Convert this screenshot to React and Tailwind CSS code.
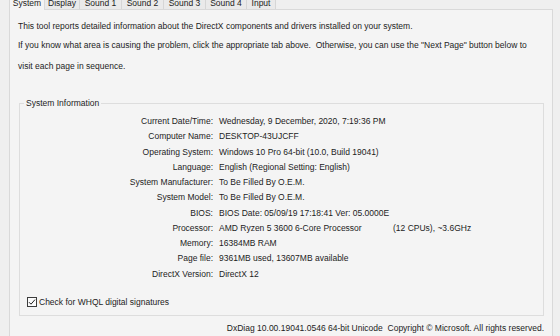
import React from 'react';

const tabs = [
  { name: 'System', w: 36, active: true },
  { name: 'Display', w: 35 },
  { name: 'Sound 1', w: 42 },
  { name: 'Sound 2', w: 42 },
  { name: 'Sound 3', w: 42 },
  { name: 'Sound 4', w: 41 },
  { name: 'Input', w: 29 },
];

const rows = [
  ['Current Date/Time:', 'Wednesday, 9 December, 2020, 7:19:36 PM'],
  ['Computer Name:', 'DESKTOP-43UJCFF'],
  ['Operating System:', 'Windows 10 Pro 64-bit (10.0, Build 19041)'],
  ['Language:', 'English (Regional Setting: English)'],
  ['System Manufacturer:', 'To Be Filled By O.E.M.'],
  ['System Model:', 'To Be Filled By O.E.M.'],
  ['BIOS:', 'BIOS Date: 05/09/19 17:18:41 Ver: 05.0000E'],
  ['Processor:', null],
  ['Memory:', '16384MB RAM'],
  ['Page file:', '9361MB used, 13607MB available'],
  ['DirectX Version:', 'DirectX 12'],
];

export default function App() {
  return (
    <div
      className="w-[560px] h-[336px] overflow-hidden bg-[#efefef] text-[8.5px] leading-[11px] text-[#1c1c1c]"
      style={{ fontFamily: '"Liberation Sans", Arial, sans-serif' }}
    >
      {/* tab strip, cut off at the top */}
      <div className="h-[9px] flex items-start relative z-10">
        <div className="flex ml-[9px] mt-[-10px] items-start">
          {tabs.map((t) =>
            t.active ? (
              <div
                key={t.name}
                className="h-[20px] flex items-end justify-center pb-[1px] bg-[#f4f4f4] border-x border-t border-[#d9d9d9]"
                style={{ width: t.w }}
              >
                {t.name}
              </div>
            ) : (
              <div
                key={t.name}
                className="h-[19px] flex items-end justify-center bg-[#eaeaea] border-r border-t border-[#d6d6d6]"
                style={{ width: t.w }}
              >
                {t.name}
              </div>
            )
          )}
        </div>
      </div>

      {/* tab page */}
      <div className="ml-[9px] w-[544px] h-[340px] border border-[#d9d9d9] bg-[#f4f4f4]">
        <div className="pl-[8px]">
          <div className="mt-[10.5px]">This tool reports detailed information about the DirectX components and drivers installed on your system.</div>
          <div className="mt-[8.5px]">If you know what area is causing the problem, click the appropriate tab above.&nbsp; Otherwise, you can use the "Next Page" button below to</div>
          <div className="mt-[9.5px]">visit each page in sequence.</div>
        </div>

        <div className="relative ml-[9px] mt-[31px] w-[525px] border border-[#dddddd] pt-[10.5px] pb-[7px]">
          <div className="absolute left-[4px] top-[-6px] px-[2px] bg-[#f4f4f4]">System Information</div>
          {rows.map(([label, value]) => (
            <div key={label} className="flex h-[15.25px] items-center">
              <div className="w-[193px] text-right whitespace-nowrap">{label}</div>
              <div className="ml-[6px] whitespace-nowrap flex">
                {value === null ? (
                  <>
                    <span className="w-[174px]">AMD Ryzen 5 3600 6-Core Processor</span>
                    <span>(12 CPUs), ~3.6GHz</span>
                  </>
                ) : (
                  value
                )}
              </div>
            </div>
          ))}
          <div className="flex items-center h-[12px] mt-[14.5px] ml-[7px]">
            <div className="w-[10px] h-[10px] border border-[#3c3c3c] bg-[#fbfbfb] flex items-center justify-center">
              <svg width="8" height="8" viewBox="0 0 8 8">
                <path d="M1 4.2 L3 6.2 L7 1.6" fill="none" stroke="#222" strokeWidth="1" />
              </svg>
            </div>
            <span className="ml-[2px]">Check for WHQL digital signatures</span>
          </div>
        </div>

        <div className="w-[534px] mt-[6.5px] text-right whitespace-nowrap">
          DxDiag 10.00.19041.0546 64-bit Unicode&nbsp; Copyright © Microsoft. All rights reserved.
        </div>
      </div>
    </div>
  );
}
